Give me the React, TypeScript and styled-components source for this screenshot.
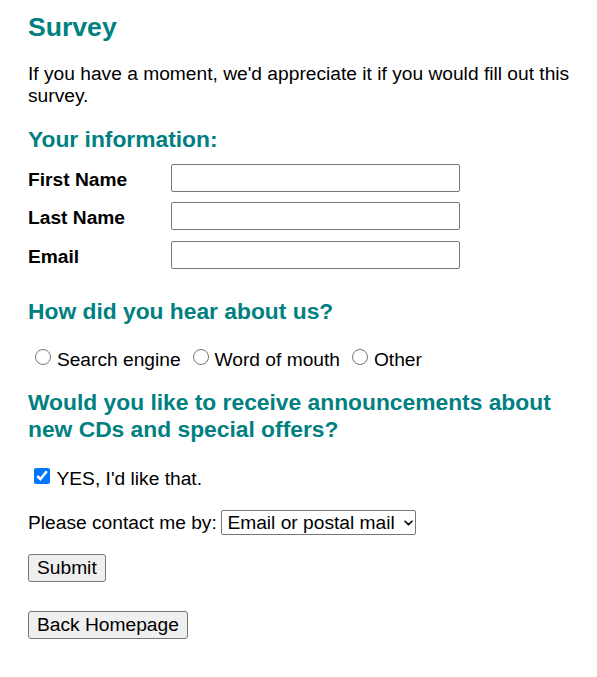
import React from "react";
import styled, { createGlobalStyle } from "styled-components";

const GlobalStyle = createGlobalStyle`
  html, body {
    margin: 0;
    padding: 0;
    background: #ffffff;
  }
  body {
    font-family: "Liberation Sans", Arial, sans-serif;
    color: #000000;
  }
`;

const Page = styled.main`
  padding: 12px 20px 0 28px;
  font-size: 19.2px;
  line-height: normal;
`;

const Title = styled.h1`
  margin: 0;
  font-size: 26.6px;
  font-weight: 700;
  line-height: normal;
  color: #008080;
`;

const Intro = styled.p`
  margin: 20px 0 0;
`;

const SectionHeading = styled.h2<{ $gap: number }>`
  margin: ${(p) => p.$gap}px 0 0;
  max-width: 541px;
  font-size: 22.8px;
  font-weight: 700;
  line-height: normal;
  color: #008080;
`;

const Fields = styled.div`
  margin-top: 10.6px;
  display: grid;
  grid-template-columns: 143px 289px;
  row-gap: 10.5px;
  align-items: center;
`;

const FieldLabel = styled.label`
  font-weight: 700;
  padding-top: 4px;
`;

const TextInput = styled.input`
  box-sizing: border-box;
  width: 289px;
  height: 28px;
  margin: 0;
  padding: 1px 3px;
  border: 1px solid #767676;
  border-radius: 2px;
  background: #ffffff;
  font: inherit;
`;

const ChoiceRow = styled.div<{ $gap: number }>`
  margin-top: ${(p) => p.$gap}px;
  display: flex;
  align-items: flex-start;
`;

const Choice = styled.label`
  display: flex;
  align-items: flex-start;
  margin-right: 5px;
`;

const Radio = styled.input`
  width: 16px;
  height: 16px;
  margin: 0 5.7px 0 7.2px;
  flex: none;
`;

const Checkbox = styled.input`
  width: 16px;
  height: 16px;
  margin: 0 6.5px 0 6px;
  flex: none;
`;

const ContactRow = styled.div`
  margin-top: 20.7px;
  display: flex;
  align-items: center;
  gap: 4.6px;
`;

const SelectWrap = styled.div`
  position: relative;
  display: inline-flex;
`;

const Select = styled.select`
  appearance: none;
  -webkit-appearance: none;
  box-sizing: border-box;
  width: 195px;
  height: 25px;
  margin: 0;
  padding: 0 20px 0 5px;
  border: 1px solid #767676;
  border-radius: 2px;
  background: #ffffff;
  color: #000000;
  font: inherit;
`;

const Chevron = styled.svg`
  position: absolute;
  right: 3px;
  top: 50%;
  width: 9px;
  height: 6px;
  margin-top: -3px;
  pointer-events: none;
`;

const Button = styled.button<{ $gap: number }>`
  display: block;
  box-sizing: border-box;
  height: 28px;
  margin: ${(p) => p.$gap}px 0 0;
  padding: 2px 8px;
  border: 1px solid #767676;
  border-radius: 3px;
  background: #efefef;
  color: #000000;
  font: inherit;
  line-height: normal;
`;

export default function App() {
  return (
    <>
      <GlobalStyle />
      <Page>
        <Title>Survey</Title>
        <Intro>
          If you have a moment, we'd appreciate it if you would fill out this
          survey.
        </Intro>

        <SectionHeading $gap={19.4}>Your information:</SectionHeading>
        <Fields>
          <FieldLabel htmlFor="first">First Name</FieldLabel>
          <TextInput id="first" type="text" />
          <FieldLabel htmlFor="last">Last Name</FieldLabel>
          <TextInput id="last" type="text" />
          <FieldLabel htmlFor="email">Email</FieldLabel>
          <TextInput id="email" type="text" />
        </Fields>

        <SectionHeading $gap={29.3}>How did you hear about us?</SectionHeading>
        <ChoiceRow $gap={23.8}>
          <Choice>
            <Radio type="radio" name="heard" />
            Search engine
          </Choice>
          <Choice>
            <Radio type="radio" name="heard" />
            Word of mouth
          </Choice>
          <Choice>
            <Radio type="radio" name="heard" />
            Other
          </Choice>
        </ChoiceRow>

        <SectionHeading $gap={17.7}>
          Would you like to receive announcements about new CDs and special
          offers?
        </SectionHeading>
        <ChoiceRow $gap={24.9}>
          <Choice>
            <Checkbox type="checkbox" defaultChecked />
            YES, I'd like that.
          </Choice>
        </ChoiceRow>

        <ContactRow>
          <span>Please contact me by:</span>
          <SelectWrap>
            <Select defaultValue="both">
              <option value="both">Email or postal mail</option>
              <option value="email">Email only</option>
              <option value="postal">Postal mail only</option>
            </Select>
            <Chevron viewBox="0 0 9 6" aria-hidden="true">
              <path
                d="M1 1.2 L4.5 4.6 L8 1.2"
                fill="none"
                stroke="#000"
                strokeWidth="1.6"
                strokeLinecap="round"
                strokeLinejoin="round"
              />
            </Chevron>
          </SelectWrap>
        </ContactRow>

        <Button $gap={19} type="submit">Submit</Button>
        <Button $gap={29} type="button">Back Homepage</Button>
      </Page>
    </>
  );
}
